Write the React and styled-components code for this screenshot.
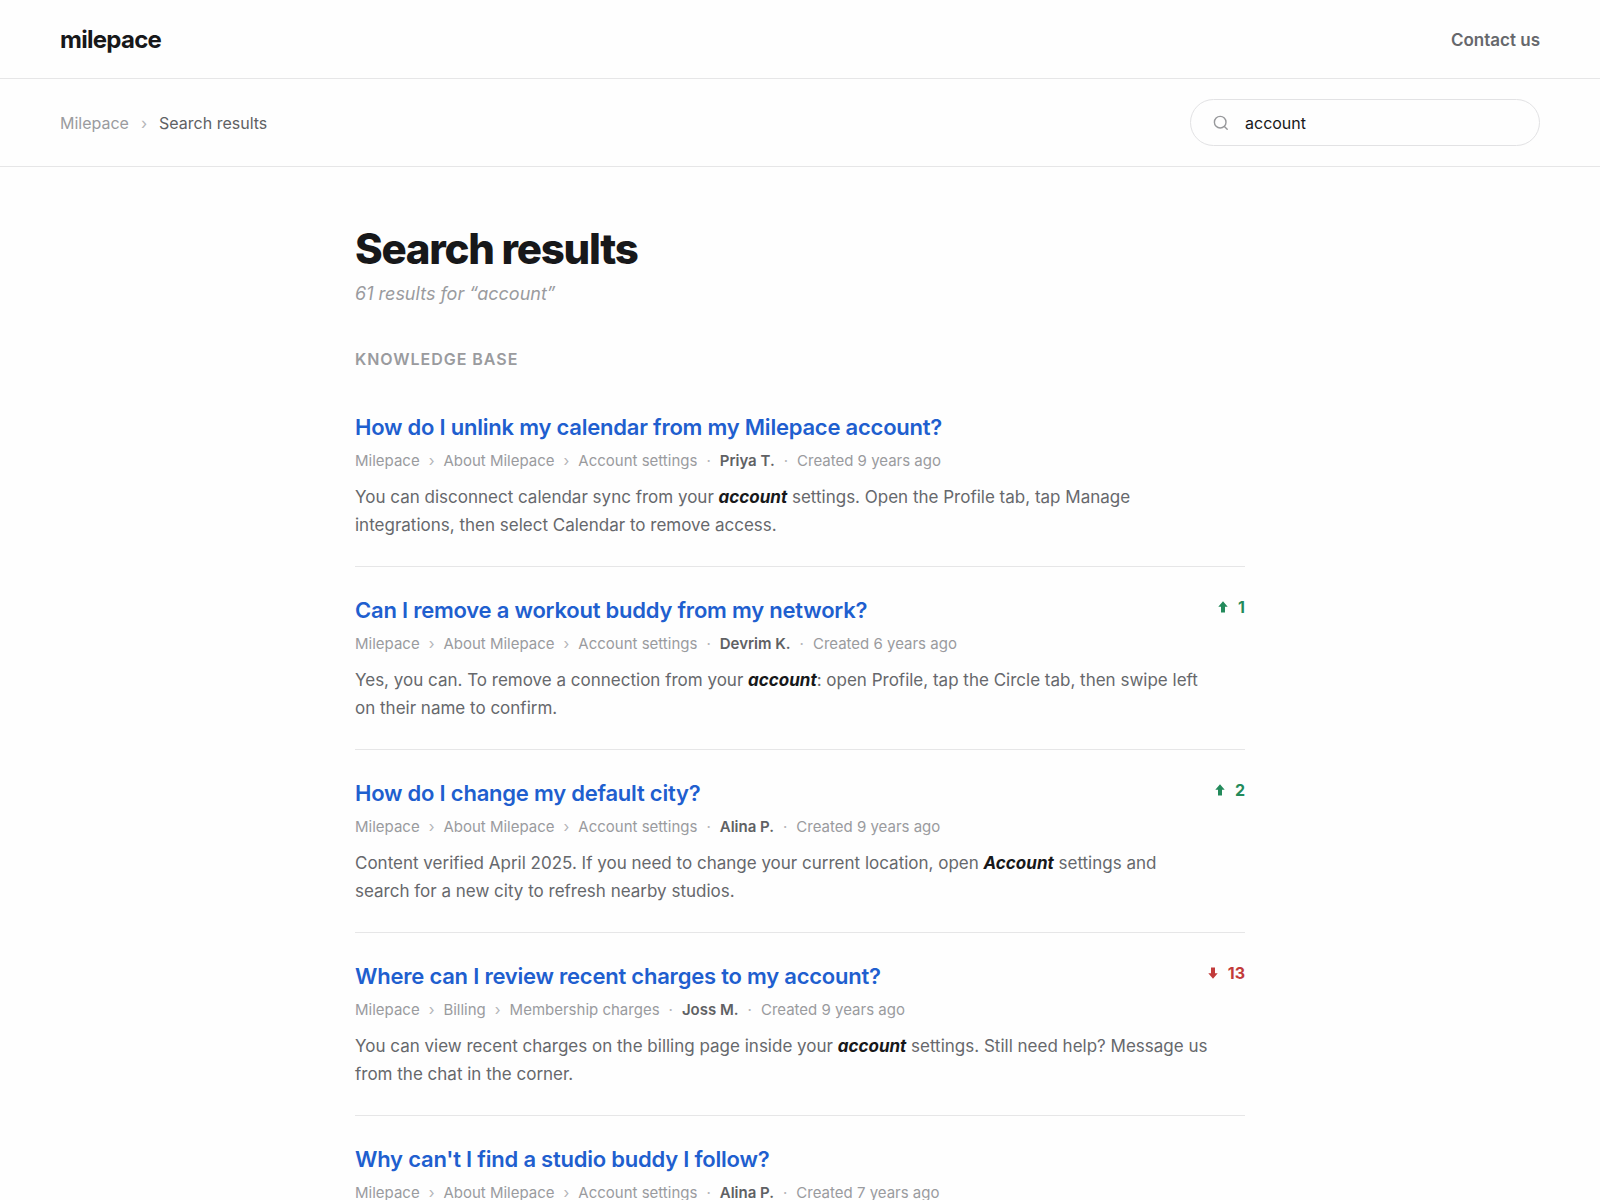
import React, { useState } from "react";
import styled, { createGlobalStyle } from "styled-components";

const GlobalStyle = createGlobalStyle`
  *, *::before, *::after { box-sizing: border-box; }
  body {
    margin: 0;
    background: #fefefe;
    color: #17181a;
    font-family: Inter, "Liberation Sans", sans-serif;
    font-size: 17px;
    line-height: 28px;
    -webkit-font-smoothing: antialiased;
  }
  a { color: inherit; text-decoration: none; }
  a:hover { text-decoration: underline; }
`;

const Bar = styled.div`
  display: flex;
  align-items: center;
  justify-content: space-between;
  padding: ${(p) => p.$pad};
  border-bottom: 1px solid #e6e6e7;
`;

const Logo = styled.a`
  font-size: 24px;
  font-weight: 700;
  line-height: 30px;
  letter-spacing: -0.03em;
`;

const ContactLink = styled.a`
  font-weight: 600;
  color: #66686c;
`;

const Crumbs = styled.nav`
  display: flex;
  align-items: center;
  gap: 12px;
  font-size: 16px;
  line-height: 24px;
  color: #9a9b9e;
`;

const Current = styled.span`
  color: #5f6164;
`;

const Separator = styled.span`
  color: #b4b5b8;
`;

const SearchForm = styled.form`
  display: flex;
  align-items: center;
  gap: 16px;
  width: 350px;
  height: 47px;
  padding: 0 22px;
  border: 1px solid #e2e2e4;
  border-radius: 24px;
`;

const SearchInput = styled.input`
  flex: 1;
  min-width: 0;
  padding: 0;
  border: 0;
  outline: 0;
  background: transparent;
  color: #17181a;
  font: inherit;
  font-size: 16px;
`;

const Main = styled.main`
  width: 100%;
  max-width: 890px;
  margin: 0 auto;
  padding-top: 56px;
`;

const Title = styled.h1`
  margin: 0;
  font-size: 42px;
  font-weight: 800;
  line-height: 52px;
  letter-spacing: -0.03em;
`;

const Count = styled.p`
  margin: 5px 0 0;
  font-size: 18px;
  font-style: italic;
  color: #9a9b9e;
`;

const SectionTitle = styled.h2`
  margin: 39px 0 13px;
  font-size: 16px;
  font-weight: 600;
  line-height: 24px;
  letter-spacing: 0.06em;
  text-transform: uppercase;
  color: #9a9b9e;
`;

const List = styled.ul`
  margin: 0;
  padding: 0;
  list-style: none;
`;

const Item = styled.li`
  padding: 28px 0 27px;
  border-bottom: 1px solid #e6e6e7;
`;

const ItemHead = styled.div`
  display: flex;
  align-items: flex-start;
  justify-content: space-between;
  gap: 24px;
`;

const ItemTitle = styled.h3`
  margin: 0;
  font-size: 22px;
  font-weight: 600;
  line-height: 30px;
  letter-spacing: -0.01em;
  color: #1f5fcf;
`;

const Votes = styled.span`
  display: flex;
  align-items: center;
  gap: 9px;
  font-size: 16px;
  font-weight: 700;
  line-height: 24px;
  color: ${(p) => (p.$down ? "#c23b3b" : "#238a5b")};
`;

const Meta = styled.div`
  display: flex;
  align-items: center;
  gap: 9px;
  margin: 7px 0 10px;
  font-size: 15px;
  line-height: 24px;
  color: #9a9b9e;
`;

const Author = styled.span`
  font-weight: 600;
  color: #5f6164;
`;

const Snippet = styled.p`
  max-width: 856px;
  margin: 0;
  color: #66686c;
`;

const Match = styled.em`
  font-weight: 700;
  color: #17181a;
`;

function SearchIcon() {
  return (
    <svg width="16" height="16" viewBox="0 0 16 16" fill="none" stroke="#97989b" strokeWidth="1.4" strokeLinecap="round" aria-hidden="true">
      <circle cx="7.2" cy="7.2" r="5.8" />
      <path d="M11.4 11.4 14.2 14.2" />
    </svg>
  );
}

function ArrowIcon({ down }) {
  return (
    <svg width="12" height="12" viewBox="0 0 12 12" fill="currentColor" aria-hidden="true">
      <path d={down ? "M6 11.7 10.7 6.2H8V.5H4V6.2H1.3Z" : "M6 .3 10.7 5.8H8v5.7H4V5.8H1.3Z"} />
    </svg>
  );
}

const results = [
  {
    title: "How do I unlink my calendar from my Milepace account?",
    path: ["Milepace", "About Milepace", "Account settings"],
    author: "Priya T.",
    created: "Created 9 years ago",
    votes: 0,
    text: ["You can disconnect calendar sync from your ", "account", " settings. Open the Profile tab, tap Manage integrations, then select Calendar to remove access."],
  },
  {
    title: "Can I remove a workout buddy from my network?",
    path: ["Milepace", "About Milepace", "Account settings"],
    author: "Devrim K.",
    created: "Created 6 years ago",
    votes: 1,
    text: ["Yes, you can. To remove a connection from your ", "account", ": open Profile, tap the Circle tab, then swipe left on their name to confirm."],
  },
  {
    title: "How do I change my default city?",
    path: ["Milepace", "About Milepace", "Account settings"],
    author: "Alina P.",
    created: "Created 9 years ago",
    votes: 2,
    text: ["Content verified April 2025. If you need to change your current location, open ", "Account", " settings and search for a new city to refresh nearby studios."],
  },
  {
    title: "Where can I review recent charges to my account?",
    path: ["Milepace", "Billing", "Membership charges"],
    author: "Joss M.",
    created: "Created 9 years ago",
    votes: -13,
    text: ["You can view recent charges on the billing page inside your ", "account", " settings. Still need help? Message us from the chat in the corner."],
  },
  {
    title: "Why can't I find a studio buddy I follow?",
    path: ["Milepace", "About Milepace", "Account settings"],
    author: "Alina P.",
    created: "Created 7 years ago",
    votes: 0,
  },
];

function Result({ item }) {
  return (
    <Item>
      <ItemHead>
        <ItemTitle><a href="#article">{item.title}</a></ItemTitle>
        {item.votes !== 0 && (
          <Votes $down={item.votes < 0}>
            <ArrowIcon down={item.votes < 0} />
            {Math.abs(item.votes)}
          </Votes>
        )}
      </ItemHead>
      <Meta>
        {item.path.map((name, i) => (
          <React.Fragment key={name}>
            {i > 0 && <Separator>›</Separator>}
            <a href="#section">{name}</a>
          </React.Fragment>
        ))}
        <Separator>·</Separator>
        <Author>{item.author}</Author>
        <Separator>·</Separator>
        <span>{item.created}</span>
      </Meta>
      {item.text && (
        <Snippet>
          {item.text[0]}
          <Match>{item.text[1]}</Match>
          {item.text[2]}
        </Snippet>
      )}
    </Item>
  );
}

export default function App() {
  const [query, setQuery] = useState("account");
  return (
    <>
      <GlobalStyle />
      <Bar as="header" $pad="25px 60px 23px">
        <Logo href="#home">milepace</Logo>
        <ContactLink href="#contact">Contact us</ContactLink>
      </Bar>
      <Bar $pad="20px 60px">
        <Crumbs aria-label="Breadcrumb">
          <a href="#home">Milepace</a>
          <Separator>›</Separator>
          <Current>Search results</Current>
        </Crumbs>
        <SearchForm role="search" onSubmit={(e) => e.preventDefault()}>
          <SearchIcon />
          <SearchInput aria-label="Search" value={query} onChange={(e) => setQuery(e.target.value)} />
        </SearchForm>
      </Bar>
      <Main>
        <Title>Search results</Title>
        <Count>61 results for “account”</Count>
        <SectionTitle>Knowledge base</SectionTitle>
        <List>
          {results.map((item) => (
            <Result key={item.title} item={item} />
          ))}
        </List>
      </Main>
    </>
  );
}
